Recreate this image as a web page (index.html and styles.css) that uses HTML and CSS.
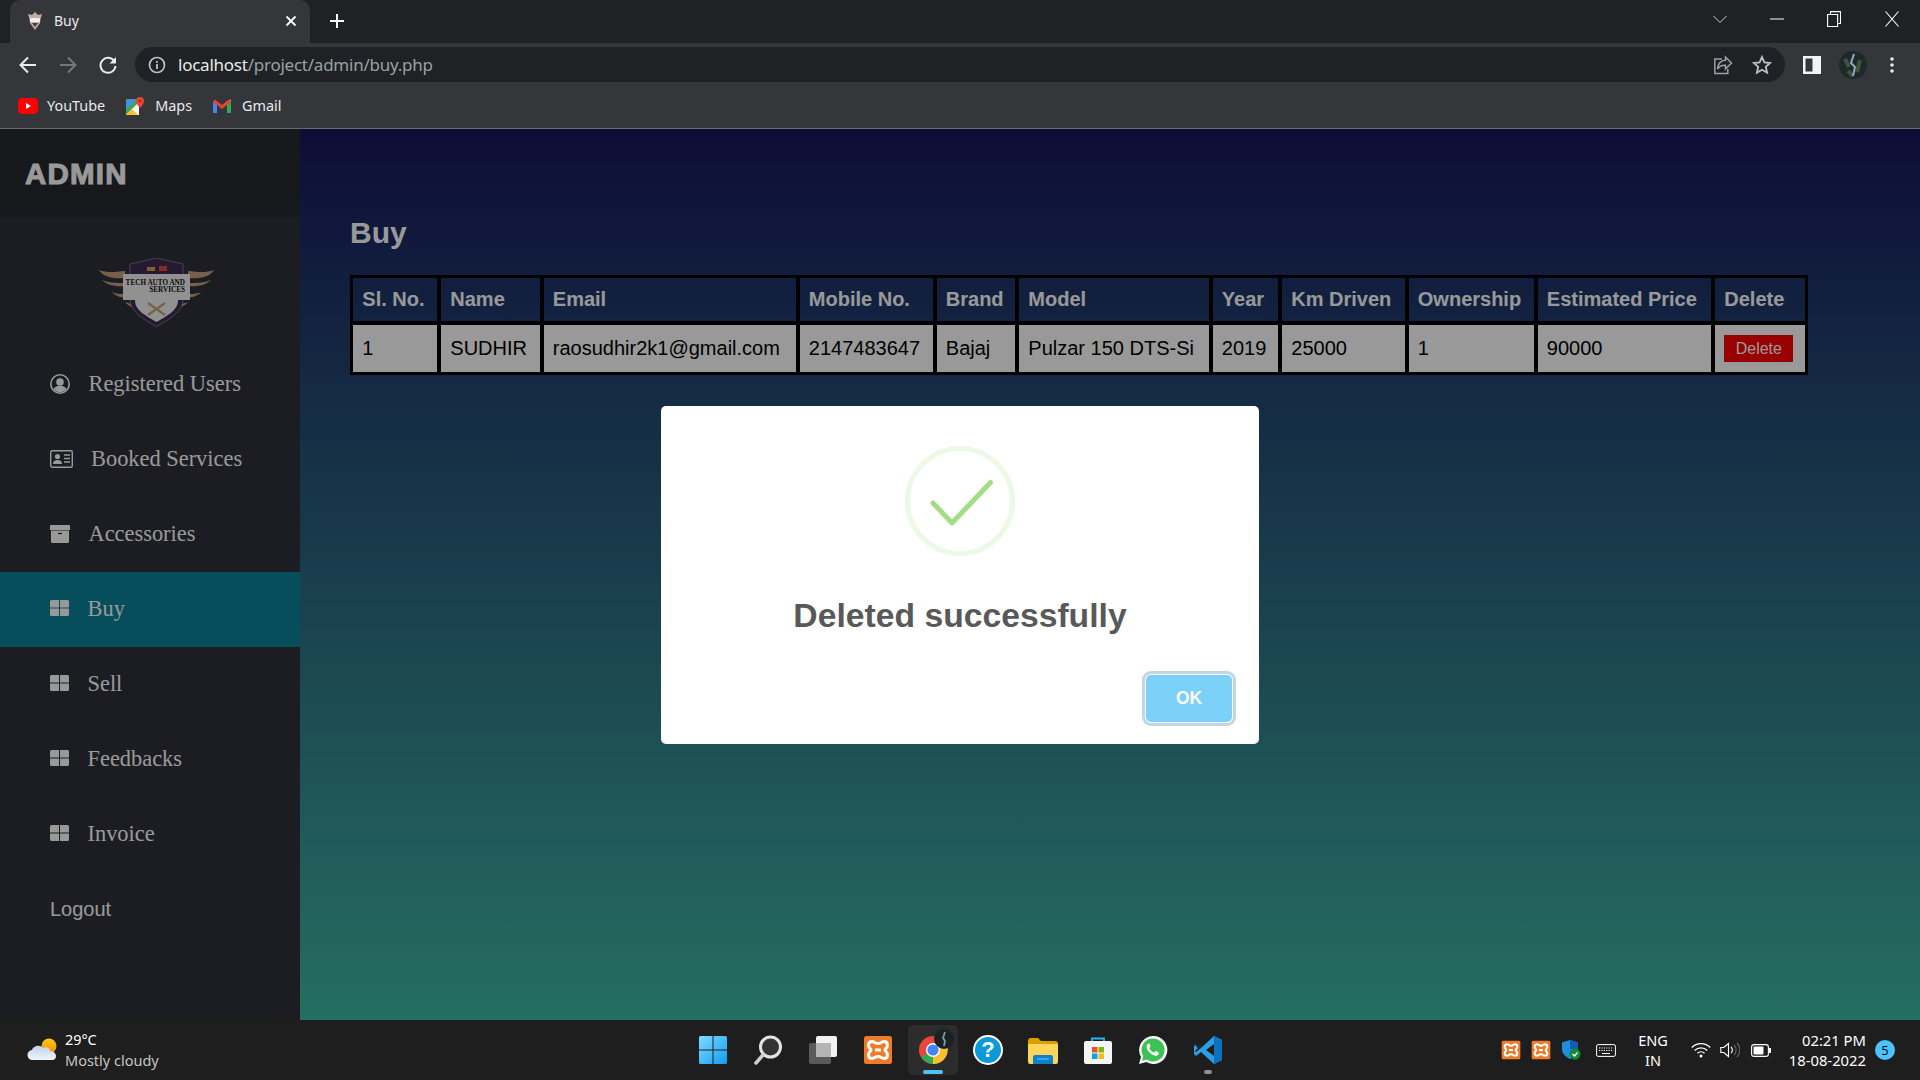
FILE: index.html
```html
<!DOCTYPE html>
<html lang="en">
<head>
<meta charset="utf-8">
<title>Buy</title>
<link rel="stylesheet" href="styles.css">
</head>
<body>
<svg class="defs" aria-hidden="true">
  <symbol id="xampp" viewBox="0 0 30 30">
    <rect x="1" y="1" width="28" height="28" rx="2.500" fill="#ee7a2a"/>
    <path d="M9 6.500c2.500 0 3 2 6 2s3.500-2 6-2c2.500 0 3.500 2 3.500 4 0 2.500-2.500 3-2.500 4.500s2.500 2 2.500 4.500c0 2-1 4-3.500 4-2.500 0-3-2-6-2s-3.500 2-6 2c-2.500 0-3.500-2-3.500-4 0-2.500 2.500-3 2.500-4.500S5.500 13 5.500 10.500c0-2 1-4 3.500-4z" fill="none" stroke="#fff" stroke-width="3"/>
    <path d="M12 15h6" stroke="#fff" stroke-width="3"/>
  </symbol>
  <symbol id="grid" viewBox="0 0 19 16">
    <path fill="currentColor" d="M0 1.500A1.500 1.500 0 0 1 1.500 0H9v7.500H0zM10 0h7.500A1.500 1.500 0 0 1 19 1.500v6h-9zM0 8.500h9V16H1.500A1.500 1.500 0 0 1 0 14.500zM10 8.500h9v6a1.500 1.500 0 0 1-1.500 1.500H10z"/>
  </symbol>
</svg>

<header class="tabstrip">
  <div class="tab">
    <svg class="favicon" viewBox="0 0 20 18"><path d="M3 2l4 1 3-3 3 3 4-1-1.500 5-.5 4-5 7-5-7-.5-4z" fill="#c2ad9e"/><rect x="5" y="6" width="10" height="4" fill="#eee"/><path d="M7 11l3 4 3-4z" fill="#4a3550"/></svg>
    <span class="tab-title">Buy</span>
    <svg class="tab-close" viewBox="0 0 12 12"><path d="M1.500 1.500l9 9M10.500 1.500l-9 9" stroke="#fff" stroke-width="1.800"/></svg>
  </div>
  <svg class="new-tab" viewBox="0 0 16 16"><path d="M8 1v14M1 8h14" stroke="#fff" stroke-width="2"/></svg>
  <div class="win-controls">
    <svg class="win-chevron" viewBox="0 0 14 8"><path d="M.5 1L7 7.500 13.500 1" fill="none" stroke="#ccc"/></svg>
    <svg class="win-min" viewBox="0 0 14 2"><path d="M0 1h14" stroke="#fff" stroke-width="1"/></svg>
    <svg class="win-restore" viewBox="0 0 14 16"><path d="M.6 3.500h10v12H.6zM3.500 3.500V.6h10v11.900h-2.900" fill="none" stroke="#fff" stroke-width="1.100"/></svg>
    <svg class="win-close" viewBox="0 0 14 16"><path d="M.5.500l13 15M13.500.500l-13 15" stroke="#fff" stroke-width="1.100"/></svg>
  </div>
</header>

<nav class="toolbar">
  <svg class="tool-icon" viewBox="0 0 20 20"><path d="M18 10H3M10 2.500L2.500 10l7.500 7.500" fill="none" stroke="#e8eaed" stroke-width="2"/></svg>
  <svg class="tool-icon" viewBox="0 0 20 20"><path d="M2 10h15M10 2.500l7.500 7.500-7.500 7.500" fill="none" stroke="#75777b" stroke-width="2"/></svg>
  <svg class="tool-icon" viewBox="0 0 20 20"><path d="M16.500 6.500A7.500 7.500 0 1 0 17.500 11" fill="none" stroke="#e8eaed" stroke-width="2"/><path d="M18 2v6.500h-6.500z" fill="#e8eaed"/></svg>
  <div class="omnibox">
    <svg class="info-icon" viewBox="0 0 18 18"><circle cx="9" cy="9" r="7.500" fill="none" stroke="#bdc1c6" stroke-width="1.700"/><path d="M9 8v5M9 5v1.800" stroke="#bdc1c6" stroke-width="1.800"/></svg>
    <div class="url"><span class="url-host">localhost</span>/project/admin/buy.php</div>
    <svg class="omni-icon" viewBox="0 0 20 20"><path d="M9 4H1.800v14.500h13V14" fill="none" stroke="#9aa0a6" stroke-width="1.500"/><path d="M18.500 8l-6-6v3.300C8 5.500 5 8.500 4.500 14c2-3 4.500-4 8-3.800V14z" fill="none" stroke="#9aa0a6" stroke-width="1.500"/></svg>
    <svg class="omni-icon star" viewBox="0 0 20 20"><path d="M10 2l2.400 5.400 5.800.6-4.400 3.900 1.300 5.800L10 14.700l-5.100 3 1.300-5.800L1.800 8l5.800-.6z" fill="none" stroke="#bdc1c6" stroke-width="1.800"/></svg>
  </div>
  <svg class="panel-icon" viewBox="0 0 18 18"><path fill="#f1f3f4" d="M0 0h18v18H0z"/><path fill="#35363a" d="M2.500 2.500h7v13h-7z"/></svg>
  <svg class="avatar" viewBox="0 0 28 28"><circle cx="14" cy="14" r="14" fill="#1c2a2c"/><path d="M6 8l4 8M21 9l-3 12M9 20l5 5" fill="none" stroke="#44523c" stroke-width="4"/><path d="M15 3l-3 9 4 4-2 9" fill="none" stroke="#8fabbf" stroke-width="2"/></svg>
  <svg class="menu-icon" viewBox="0 0 4 18"><circle cx="2" cy="3" r="1.800" fill="#e8eaed"/><circle cx="2" cy="9" r="1.800" fill="#e8eaed"/><circle cx="2" cy="15" r="1.800" fill="#e8eaed"/></svg>
</nav>

<div class="bookmarks">
  <a class="bookmark">
    <svg class="bm-yt" viewBox="0 0 20 16"><rect width="20" height="16" rx="4" fill="#f00"/><path d="M8 5l5 3-5 3z" fill="#fff"/></svg>
    <span>YouTube</span>
  </a>
  <a class="bookmark">
    <svg class="bm-maps" viewBox="0 0 18 18"><path d="M0 2h13v16H0z" fill="#35a85a"/><path d="M0 18L13 5v13z" fill="#f8f6ef"/><path d="M0 18l6-6 6 6z" fill="#fbc02d"/><path d="M4 2h6L0 12V6z" fill="#4a8af4"/><path d="M14 0a4 4 0 0 1 4 4c0 3-4 7-4 7s-4-4-4-7a4 4 0 0 1 4-4z" fill="#ea4335"/><circle cx="14" cy="4" r="1.300" fill="#a52714"/></svg>
    <span>Maps</span>
  </a>
  <a class="bookmark">
    <svg class="bm-gmail" viewBox="0 0 18 14"><path d="M0 2.500V14h4V5.500z" fill="#4285f4"/><path d="M14 5.500V14h4V2.500z" fill="#34a853"/><path d="M0 2.500L2 .5 9 6l7-5.500 2 2L9 10z" fill="#ea4335"/><path d="M16 .5l2 2V1z" fill="#fbbc04"/></svg>
    <span>Gmail</span>
  </a>
</div>

<div class="page">
  <aside class="sidebar">
    <div class="brand">ADMIN</div>
    <div class="logo-box">
      <svg class="logo" viewBox="0 0 115 69">
        <g fill="#c6a17c">
          <path d="M0 12C8 15 16 14 26 13V20C14 21 4 19 0 12z"/>
          <path d="M3 22C10 25 18 25 26 25v3C16 29 8 27 3 22z"/>
          <path d="M13 34C17 36 21 36 28 36v3C22 40 16 38 13 34z"/>
          <path d="M26 44C29 45 32 46 36 46v3C32 49 28 47 26 44z"/>
          <path d="M115 12C107 15 99 14 89 13V20C101 21 111 19 115 12z"/>
          <path d="M112 22C105 25 97 25 89 25v3C99 29 107 27 112 22z"/>
          <path d="M102 34C98 36 94 36 87 36v3C93 40 99 38 102 34z"/>
          <path d="M89 44C86 45 83 46 79 46v3C83 49 87 47 89 44z"/>
        </g>
        <path d="M31 6L57.500 0 84 6v36c0 11-14 20-26.500 26.500C45 62 31 53 31 42z" fill="#3f2c52" stroke="#b9b0c0" stroke-width=".5"/>
        <path d="M36 40h43v3c0 9-11 15-21.500 21C47 58 36 52 36 43z" fill="#f2f2f2"/>
        <rect x="24" y="16" width="67" height="26" fill="#f2f2f2"/>
        <rect x="48" y="9" width="8" height="4" fill="#d6a64a"/><rect x="60" y="8" width="8" height="5" fill="#e04a3a"/>
        <text class="logo-text" x="86" y="26.500" text-anchor="end">TECH AUTO AND</text>
        <text class="logo-text" x="86" y="33.800" text-anchor="end">SERVICES</text>
        <path d="M49 57l17-12M66 57L49 45" stroke="#c6a17c" stroke-width="2.200"/>
      </svg>
    </div>
    <ul class="menu">
      <li class="menu-item"><svg class="mi-icon mi-user" viewBox="0 0 20 20"><circle cx="10" cy="10" r="10" fill="currentColor"/><circle cx="10" cy="10" r="8.400" fill="#2f3139"/><circle cx="10" cy="8" r="3.800" fill="currentColor"/><path d="M3.500 15c1.500-2.500 3.500-3.300 6.500-3.300s5 .8 6.500 3.300a8.400 8.400 0 0 1-13 0z" fill="currentColor"/></svg><span class="mi-label">Registered Users</span></li>
      <li class="menu-item"><svg class="mi-icon mi-card" viewBox="0 0 23 18"><rect x=".7" y=".7" width="21.600" height="16.600" rx="1.500" fill="none" stroke="currentColor" stroke-width="1.400"/><circle cx="7.500" cy="6.500" r="2.600" fill="currentColor"/><path d="M3 14c0-3 2-4 4.500-4s4.500 1 4.500 4z" fill="currentColor"/><path d="M14 5h6M14 8.500h6M14 12h6" stroke="currentColor" stroke-width="1.500"/></svg><span class="mi-label">Booked Services</span></li>
      <li class="menu-item"><svg class="mi-icon mi-box" viewBox="0 0 20 18"><path d="M0 0h20v5H0z" fill="currentColor"/><path d="M1 5.500h18v11a1.500 1.500 0 0 1-1.500 1.500h-15A1.500 1.500 0 0 1 1 16.500z" fill="currentColor"/><path d="M8 8.500h4" stroke="#2f3139" stroke-width="1.300"/></svg><span class="mi-label">Accessories</span></li>
      <li class="menu-item is-active"><svg class="mi-icon mi-grid"><use href="#grid"/></svg><span class="mi-label">Buy</span></li>
      <li class="menu-item"><svg class="mi-icon mi-grid"><use href="#grid"/></svg><span class="mi-label">Sell</span></li>
      <li class="menu-item"><svg class="mi-icon mi-grid"><use href="#grid"/></svg><span class="mi-label">Feedbacks</span></li>
      <li class="menu-item"><svg class="mi-icon mi-grid"><use href="#grid"/></svg><span class="mi-label">Invoice</span></li>
      <li class="menu-item logout">Logout</li>
    </ul>
  </aside>

  <main class="content">
    <h1 class="page-title">Buy</h1>
    <table class="data-table">
      <colgroup>
        <col class="c1"><col class="c2"><col class="c3"><col class="c4"><col class="c5"><col class="c6"><col class="c7"><col class="c8"><col class="c9"><col class="c10"><col class="c11">
      </colgroup>
      <thead>
        <tr><th>Sl. No.</th><th>Name</th><th>Email</th><th>Mobile No.</th><th>Brand</th><th>Model</th><th>Year</th><th>Km Driven</th><th>Ownership</th><th>Estimated Price</th><th>Delete</th></tr>
      </thead>
      <tbody>
        <tr><td>1</td><td>SUDHIR</td><td>raosudhir2k1@gmail.com</td><td>2147483647</td><td>Bajaj</td><td>Pulzar 150 DTS-Si</td><td>2019</td><td>25000</td><td>1</td><td>90000</td><td><button class="delete-btn" type="button">Delete</button></td></tr>
      </tbody>
    </table>
  </main>

  <div class="overlay">
    <div class="modal">
      <svg class="check" viewBox="0 0 110 110"><circle cx="55" cy="55" r="52.500" fill="none" stroke="#a5dc86" stroke-opacity=".2" stroke-width="5"/><path d="M28 57L47 77 85.500 36.500" fill="none" stroke="#a5dc86" stroke-width="5" stroke-linecap="round" stroke-linejoin="round"/></svg>
      <div class="modal-title">Deleted successfully</div>
      <div class="modal-footer"><button class="ok-btn" type="button">OK</button></div>
    </div>
  </div>
</div>

<footer class="taskbar">
  <div class="weather">
    <svg class="weather-icon" viewBox="0 0 30 24"><defs><linearGradient id="sun" x1="0" y1="0" x2="0" y2="1"><stop offset="0" stop-color="#ffc71a"/><stop offset="1" stop-color="#f09000"/></linearGradient><linearGradient id="cloud" x1="0" y1="0" x2="0" y2="1"><stop offset="0" stop-color="#bcd2ea"/><stop offset="1" stop-color="#f1f5f9"/></linearGradient></defs><circle cx="22" cy="8" r="7.500" fill="url(#sun)"/><path d="M6 22a5 5 0 0 1-1-10c1-4 8-6 11-2 3-2 7 0 7 3 4 0 6 3 6 5s-1 4-4 4z" fill="url(#cloud)"/></svg>
    <div class="weather-text"><div class="temp">29°C</div><div class="cond">Mostly cloudy</div></div>
  </div>
  <div class="task-icons">
    <svg class="task-icon" viewBox="0 0 30 30"><defs><linearGradient id="win" x1="0" y1="0" x2="1" y2="1"><stop offset="0" stop-color="#7fdcff"/><stop offset="1" stop-color="#109cf2"/></linearGradient></defs><path fill="url(#win)" d="M1 2.500A1.500 1.500 0 0 1 2.500 1h12v13.500H1zM15.500 1h12A1.500 1.500 0 0 1 29 2.500v12H15.500zM1 15.500h13.500V29h-12A1.500 1.500 0 0 1 1 27.500zM15.500 15.500H29v12a1.500 1.500 0 0 1-1.500 1.500h-12z"/></svg>
    <svg class="task-icon" viewBox="0 0 30 30"><circle cx="17.500" cy="12" r="10" fill="#333" stroke="#e4e4e4" stroke-width="3"/><path d="M10 20l-7 8" stroke="#cfcfcf" stroke-width="3.500" stroke-linecap="round"/></svg>
    <svg class="task-icon" viewBox="0 0 30 30"><rect x="1" y="8" width="22" height="21" rx="2" fill="#5a5a5a"/><rect x="8" y="1" width="21" height="21" rx="2" fill="#f2f2f2"/><rect x="8" y="8" width="15" height="14" fill="#b5b5b5"/></svg>
    <svg class="task-icon" viewBox="0 0 30 30"><use href="#xampp"/></svg>
    <div class="task-active">
      <svg class="task-icon" viewBox="0 0 30 30"><circle cx="15" cy="15" r="14" fill="#e8453c"/><path d="M15 15L3 22a14 14 0 0 0 15 6.700z" fill="#34a853"/><path d="M15 8h12.800A14 14 0 0 1 15 29z" fill="#fbc02d"/><circle cx="15" cy="15" r="7" fill="#fff"/><circle cx="15" cy="15" r="5.600" fill="#4285f4"/></svg>
      <svg class="task-badge" viewBox="0 0 20 20"><circle cx="10" cy="10" r="10" fill="#1b2224"/><path d="M11 3l-2 6 2 3-1 5" fill="none" stroke="#7f97a8" stroke-width="1.800"/></svg>
      <span class="active-bar"></span>
    </div>
    <svg class="task-icon" viewBox="0 0 30 30"><circle cx="15" cy="15" r="14" fill="#0a9ad8" stroke="#fff" stroke-width="2"/><text class="help-text" x="15" y="22" text-anchor="middle">?</text></svg>
    <svg class="task-icon" viewBox="0 0 30 30"><path d="M0 6a3 3 0 0 1 3-3h7l3 3h14a3 3 0 0 1 3 3v3H0z" fill="#d9a000"/><path d="M0 9h30v18a2 2 0 0 1-2 2H2a2 2 0 0 1-2-2z" fill="#fcd55a"/><path d="M5 29v-7a2 2 0 0 1 2-2h16a2 2 0 0 1 2 2v7z" fill="#0f7fd0"/><path d="M9 24h12" stroke="#4db3f0" stroke-width="1.500"/></svg>
    <svg class="task-icon" viewBox="0 0 30 30"><path d="M9 7V3.500h12V7" fill="none" stroke="#29b6f6" stroke-width="1.800"/><path d="M1 8a2 2 0 0 1 2-2h24a2 2 0 0 1 2 2v19a2 2 0 0 1-2 2H3a2 2 0 0 1-2-2z" fill="#f5f5f5"/><rect x="9" y="12" width="5.500" height="5.500" fill="#f25022"/><rect x="15.500" y="12" width="5.500" height="5.500" fill="#7fba00"/><rect x="9" y="18.500" width="5.500" height="5.500" fill="#00a4ef"/><rect x="15.500" y="18.500" width="5.500" height="5.500" fill="#ffb900"/></svg>
    <svg class="task-icon" viewBox="0 0 30 30"><path d="M15 1a14 14 0 0 0-12 21L1 29l7.300-1.900A14 14 0 1 0 15 1z" fill="#fff"/><path d="M15 3.500a11.500 11.500 0 0 0-9.700 17.700L4 25.800l4.800-1.200A11.500 11.500 0 1 0 15 3.500z" fill="#3dc355"/><path d="M11 8.500c-.5 0-1.500.5-2 1.500-1 2 0 5 2.500 7.500s5.500 3.800 7.500 3c1.200-.5 2-1.500 2-2.500 0-.5-3-2-3.500-2-.5 0-1 1.300-1.500 1.500-1.500 0-4.500-3-4.700-4.500 0-.5 1.200-1 1.200-1.600S11.500 8.500 11 8.500z" fill="#fff"/></svg>
    <div class="task-vscode">
      <svg class="task-icon" viewBox="0 0 30 30"><path d="M21 1l8 4v20l-8 4-13-12-5 4-2-2v-8l2-2 5 4z" fill="#2a9fe6"/><path d="M21 1l8 4v20l-8 4z" fill="#0c72bd"/><path d="M21 9l-8 6 8 6z" fill="#1e1e1e"/><path d="M3 9l5 4-5 4-1-1 3-3-3-3z" fill="#1e1e1e"/></svg>
      <span class="open-bar"></span>
    </div>
  </div>
  <div class="tray">
    <svg class="tray-icon xa" viewBox="0 0 30 30"><use href="#xampp"/></svg>
    <svg class="tray-icon xa" viewBox="0 0 30 30"><use href="#xampp"/></svg>
    <svg class="tray-icon shield" viewBox="0 0 20 20"><path d="M9 0l8 2.500V9c0 5-4 8-8 10C5 17 1 14 1 9V2.500z" fill="#1f8fdc"/><path d="M9 0l8 2.500V9H9z" fill="#0f5fae"/><circle cx="14" cy="14" r="5.500" fill="#108a33"/><path d="M11.500 14l2 2 3-3.500" fill="none" stroke="#fff" stroke-width="1.400"/></svg>
    <svg class="tray-icon keyboard" viewBox="0 0 20 13"><rect x=".6" y=".6" width="18.800" height="11.800" rx="1.500" fill="none" stroke="#fff" stroke-width="1"/><path d="M3 4h14M3 6.500h14" stroke="#fff" stroke-dasharray="1.200 1.200" stroke-width="1"/><path d="M6 9.500h8" stroke="#fff" stroke-width="1"/></svg>
    <div class="lang">ENG<br>IN</div>
    <svg class="tray-icon wifi" viewBox="0 0 20 16"><path d="M.8 5.500a13 13 0 0 1 18.400 0M3.700 8.500a9 9 0 0 1 12.600 0M6.500 11.300a5 5 0 0 1 7 0" fill="none" stroke="#fff" stroke-width="1.300"/><circle cx="10" cy="14" r="1.500" fill="#fff"/></svg>
    <svg class="tray-icon vol" viewBox="0 0 20 16"><path d="M.8 5.500h3L8.500 1.500v13L3.800 10.500h-3z" fill="none" stroke="#fff" stroke-width="1.100"/><path d="M11 5a4 4 0 0 1 0 6" fill="none" stroke="#fff" stroke-width="1.100"/><path d="M14 3a7 7 0 0 1 0 10M17 1a10 10 0 0 1 0 14" fill="none" stroke="#666" stroke-width="1.100"/></svg>
    <svg class="tray-icon batt" viewBox="0 0 20 13"><rect x=".6" y=".6" width="16.800" height="11.800" rx="2.500" fill="none" stroke="#fff" stroke-width="1.100"/><rect x="2.500" y="2.500" width="10" height="8" rx="1" fill="#fff"/><rect x="18" y="4" width="2" height="5" fill="#fff"/></svg>
    <div class="clock">02:21 PM<br>18-08-2022</div>
    <div class="notif">5</div>
  </div>
</footer>
</body>
</html>
```

FILE: styles.css
```css
* { box-sizing: border-box; }
html, body { margin: 0; height: 100%; overflow: hidden; }
body { display: flex; flex-direction: column; width: 1920px; height: 1080px; font-family: "Liberation Sans", Arial, sans-serif; background: #202124; }
.defs { position: absolute; width: 0; height: 0; }
button { font-family: inherit; border: 0; }

/* Browser chrome */
.tabstrip { height: 43px; flex: none; background: #202124; display: flex; align-items: center; padding-left: 10px; }
.tab { width: 300px; height: 43px; background: #35363a; border-radius: 10px 10px 0 0; display: flex; align-items: center; padding: 0 13px 2px 15px; }
.favicon { width: 20px; height: 18px; margin-right: 9px; }
.tab-title { flex: 1; color: #e8eaed; font: 14px "Noto Sans", sans-serif; }
.tab-close { width: 12px; height: 12px; }
.new-tab { width: 16px; height: 16px; margin: 0 0 2px 19px; }
.win-controls { margin-left: auto; display: flex; align-items: center; padding-right: 21px; height: 36px; margin-bottom: 6px; }
.win-chevron { width: 14px; height: 8px; margin-right: 43px; }
.win-min { width: 14px; height: 2px; margin-right: 43px; }
.win-restore { width: 14px; height: 16px; margin-right: 44px; }
.win-close { width: 14px; height: 16px; }

.toolbar { height: 43px; flex: none; background: #35363a; display: flex; align-items: center; padding: 0 26px 0 18px; }
.tool-icon { width: 20px; height: 20px; margin-right: 20px; flex: none; }
.tool-icon:nth-child(3) { margin-right: 17px; }
.omnibox { width: 1650px; height: 35px; background: #202124; border-radius: 18px; display: flex; align-items: center; padding: 0 13px 0 13px; }
.info-icon { width: 18px; height: 18px; margin-right: 12px; }
.url { flex: 1; color: #9aa0a6; font: 17px "Noto Sans", sans-serif; letter-spacing: -.24px; }
.url-host { color: #e8eaed; }
.omni-icon { width: 20px; height: 20px; margin-left: 19px; }
.panel-icon { width: 18px; height: 18px; margin-left: 18px; }
.avatar { width: 28px; height: 28px; margin-left: 18px; }
.menu-icon { width: 4px; height: 18px; margin-left: 23px; }

.bookmarks { height: 43px; flex: none; background: #35363a; border-bottom: 1px solid #6b6c70; display: flex; align-items: center; padding-left: 18px; padding-bottom: 3px; color: #e8eaed; font: 14.400px "Noto Sans", sans-serif; }
.bookmark { display: flex; align-items: center; margin-right: 21px; }
.bm-yt { width: 20px; height: 16px; margin-right: 9px; }
.bm-maps { width: 18px; height: 18px; margin-right: 11px; }
.bm-gmail { width: 18px; height: 14px; margin-right: 11px; }

/* Page */
.page { flex: 1; min-height: 0; display: flex; position: relative; }
.sidebar { width: 300px; flex: none; background: #2f3139; color: #fff; display: flex; flex-direction: column; }
.brand { height: 88px; flex: none; background: #26282e; padding: 2px 0 0 25px; display: flex; align-items: center; font-size: 29.500px; font-weight: 700; letter-spacing: 1.200px; -webkit-text-stroke: 1px #fff; }
.logo-box { height: 130px; flex: none; display: flex; justify-content: center; padding: 41px 0 0 13px; }
.logo { width: 115px; height: 69px; }
.logo-text { font: 700 7.200px "Liberation Serif", serif; fill: #111; }
.menu { list-style: none; margin: 0; padding: 0; }
.menu-item { height: 75px; padding-left: 50px; display: flex; align-items: center; font: 22.400px "Liberation Serif", serif; }
.menu-item.is-active { background: #0a8299; }
.logout { font: 20px "Liberation Sans", sans-serif; }
.mi-icon { display: block; transform: translateY(-1px); flex: none; }
.mi-user { width: 20px; height: 20px; margin-right: 18.500px; }
.mi-card { width: 23px; height: 18px; margin-right: 18px; }
.mi-box { width: 20px; height: 18px; margin-right: 18.500px; }
.mi-grid { width: 19px; height: 16px; margin-right: 18.500px; color: #fff; transform: translateY(-2px); }
.mi-label { display: block; transform: translateY(-1px); }

.content { flex: 1; min-width: 0; padding: 80px 112px 0 50px; color: #fff; background: linear-gradient(#17175c, #3fb8a3); }
.page-title { margin: 0 0 18px; font-size: 30px; line-height: 48px; font-weight: 700; }
.data-table { width: 1458px; table-layout: fixed; border-collapse: separate; border-spacing: 0; border: 1px solid #000; font-size: 20px; }
.c1 { width: 88px; } .c2 { width: 102.500px; } .c3 { width: 256px; } .c4 { width: 137px; } .c5 { width: 82.500px; } .c6 { width: 193.500px; } .c7 { width: 69.500px; } .c8 { width: 126.500px; } .c9 { width: 129px; } .c10 { width: 177.500px; } .c11 { width: 94px; }
.data-table th, .data-table td { border: 2px solid #000; padding: 5px 8px 5px 9.300px; text-align: left; white-space: nowrap; overflow: visible; }
.data-table th { height: 47px; font-weight: 700; color: #fff; }
.data-table td { height: 51px; background: #fff; color: #000; }
.delete-btn { display: block; width: 69px; height: 27px; padding: 0; background: #f00; color: #fff; font-size: 16px; }

/* Modal */
.overlay { position: absolute; inset: 0; background: rgba(0, 0, 0, .4); display: flex; align-items: center; justify-content: center; }
.modal { width: 598px; height: 338px; margin-top: 1px; background: #fff; border-radius: 5px; padding-top: 40px; display: flex; flex-direction: column; align-items: center; }
.check { width: 110px; height: 110px; flex: none; }
.modal-title { margin-top: 40px; height: 40px; line-height: 39px; font-size: 33.700px; font-weight: 700; color: #595959; }
.modal-footer { align-self: stretch; margin-top: 39px; padding-right: 27px; display: flex; justify-content: flex-end; }
.ok-btn { width: 86px; height: 47px; background: #7cd1f9; border-radius: 5px; color: #fff; font-size: 17.500px; font-weight: 700; box-shadow: 0 0 0 1px #fff, 0 0 0 4px rgba(43, 114, 165, .29); }

/* Taskbar */
.taskbar { height: 60px; flex: none; background: #1e1e1e; display: grid; grid-template-columns: 1fr auto 1fr; align-items: center; color: #fff; font-family: "Noto Sans", sans-serif; }
.weather { display: flex; align-items: center; padding-left: 27px; }
.weather-icon { width: 30px; height: 24px; margin-right: 8px; }
.temp { font-size: 14.400px; line-height: 20.500px; }
.cond { font-size: 14.500px; line-height: 20.500px; color: #c4c4c4; }
.task-icons { display: flex; align-items: center; gap: 25px; }
.task-icon { width: 30px; height: 30px; display: block; flex: none; }
.task-active { width: 50px; height: 50px; margin: 0 -10px; background: #2c2c2c; border-radius: 5px; display: flex; align-items: center; justify-content: center; position: relative; }
.task-badge { position: absolute; right: 4px; top: 4px; width: 20px; height: 20px; }
.active-bar { position: absolute; left: 15px; bottom: 1px; width: 20px; height: 4px; border-radius: 2px; background: #4cc2ff; }
.task-vscode { position: relative; }
.open-bar { position: absolute; left: 11px; bottom: -9px; width: 8px; height: 4px; border-radius: 2px; background: #8f8f8f; }
.tray { display: flex; align-items: center; justify-content: flex-end; padding-right: 25px; font-size: 14.500px; }
.tray-icon { display: block; flex: none; }
.xa { width: 20px; height: 20px; margin-right: 10px; }
.shield { width: 20px; height: 20px; margin-right: 15px; }
.keyboard { width: 20px; height: 13px; margin-right: 10px; }
.lang { width: 54px; text-align: center; line-height: 20px; margin-right: 11px; }
.wifi { width: 20px; height: 16px; margin-right: 9px; }
.vol { width: 20px; height: 16px; margin-right: 11px; }
.batt { width: 20px; height: 13px; margin-right: 16px; }
.clock { width: 79px; text-align: right; line-height: 20px; font-size: 14.800px; white-space: nowrap; }
.notif { width: 20px; height: 20px; margin-left: 9px; border-radius: 50%; background: #4cc2ff; color: #111; font-size: 13px; line-height: 20px; text-align: center; }
.help-text { font: 700 22px "Liberation Sans", sans-serif; fill: #fff; }
```
